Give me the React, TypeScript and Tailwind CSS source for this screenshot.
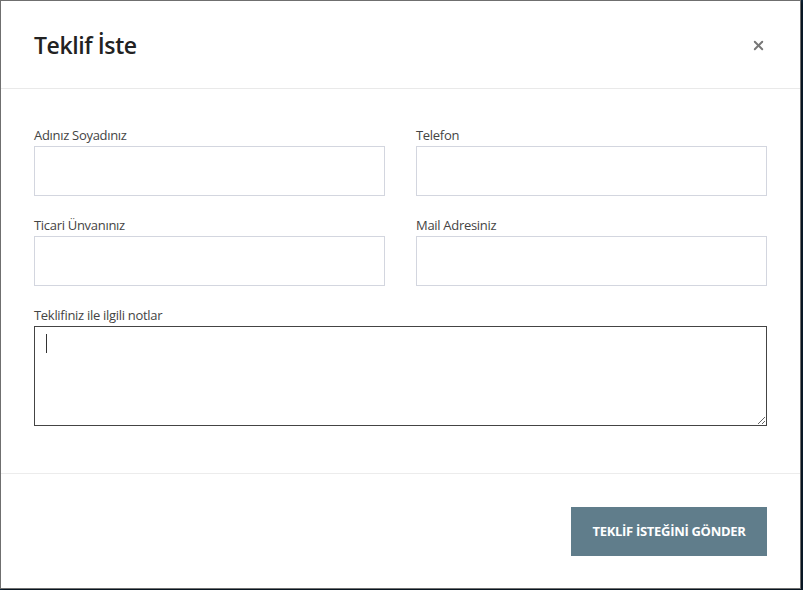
import { X } from 'lucide-react'

const font = { fontFamily: '"Open Sans", "Noto Sans", sans-serif' }

function Field({ label }: { label: string }) {
  return (
    <div className="flex flex-col">
      <label className="text-[13px] leading-[18px] text-[#444] mb-[2px] tracking-[-0.3px]">{label}</label>
      <input type="text" className="h-[50px] w-full border border-[#d3d6df] bg-white outline-none" />
    </div>
  )
}

export default function App() {
  return (
    <div className="w-[803px] h-[590px] bg-[#0d2438] overflow-hidden" style={font}>
      <div className="w-[801px] h-[589px] bg-white border border-[#6f6f6f] flex flex-col shadow-[2px_2px_3px_rgba(0,0,0,0.5)]">
        {/* header */}
        <div className="h-[88px] shrink-0 flex items-center justify-between pl-[33px] pr-[34px] border-b border-[#e9e9e9]">
          <h2 className="text-[23px] text-[#222] font-semibold tracking-[-0.4px] pt-[2px]">Teklif İste</h2>
          <button className="text-[#777] pt-[2px]">
            <X className="w-[15px] h-[15px]" strokeWidth={3} />
          </button>
        </div>

        {/* body */}
        <div className="h-[385px] shrink-0 px-[33px] pt-[37px] border-b border-[#ececec]">
          <div className="grid grid-cols-2 gap-x-[31px] gap-y-[20px]">
            <Field label="Adınız Soyadınız" />
            <Field label="Telefon" />
            <Field label="Ticari Ünvanınız" />
            <Field label="Mail Adresiniz" />
          </div>
          <div className="flex flex-col mt-[20px]">
            <label className="text-[13px] leading-[18px] text-[#444] mb-[2px] tracking-[-0.3px]">Teklifiniz ile ilgili notlar</label>
            <div className="relative">
              <textarea className="block h-[100px] w-full border border-[#444] bg-white outline-none" />
              <span className="absolute left-[12px] top-[8px] w-px h-[19px] bg-[#333]" />
            </div>
          </div>
        </div>

        {/* footer */}
        <div className="flex-1 flex items-start justify-end px-[33px] pt-[33px]">
          <button className="w-[196px] h-[49px] bg-[#607d8b] text-white text-[13px] font-bold tracking-[-0.3px]">
            TEKLİF İSTEĞİNİ GÖNDER
          </button>
        </div>
      </div>
    </div>
  )
}
